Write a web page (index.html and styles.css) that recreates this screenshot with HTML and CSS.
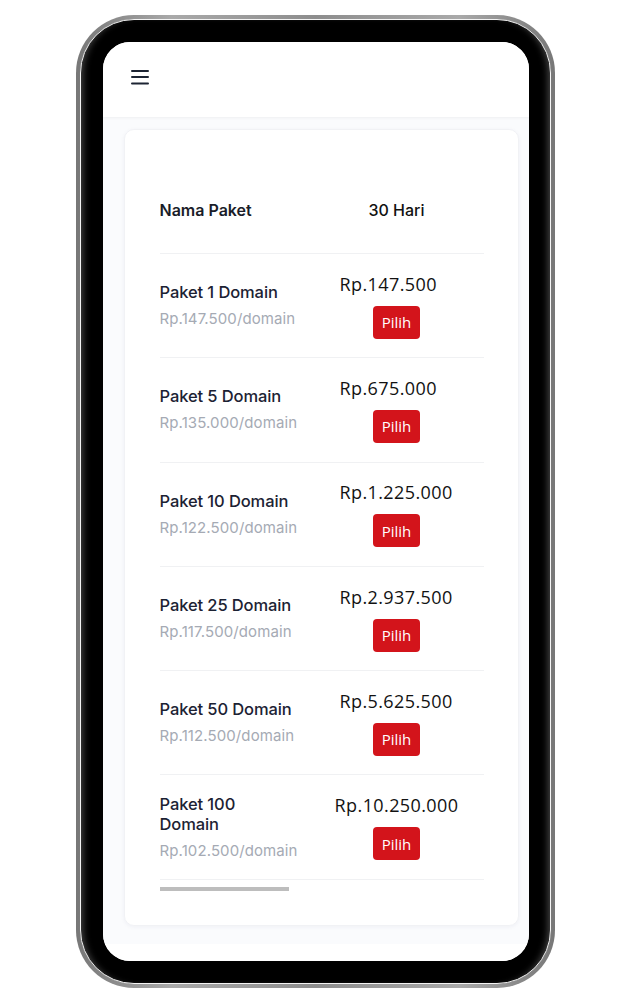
FILE: index.html
```html
<!DOCTYPE html>
<html lang="id">
<head>
<meta charset="utf-8">
<title>Paket Domain</title>
<link rel="stylesheet" href="styles.css">
</head>
<body>
<div class="phone">
  <div class="bezel">
    <div class="screen">
      <header class="topbar">
        <svg class="menu" width="18" height="16" viewBox="0 0 18 16" aria-hidden="true">
          <rect x="0" y="1" width="18" height="2" rx="1" fill="#1d2433"/>
          <rect x="0" y="7" width="18" height="2" rx="1" fill="#1d2433"/>
          <rect x="0" y="13.5" width="18" height="2" rx="1" fill="#1d2433"/>
        </svg>
      </header>
      <main class="main">
        <section class="card">
          <div class="table-wrap">
            <table class="pricing">
              <thead>
                <tr>
                  <th class="col-name">Nama Paket</th>
                  <th class="col-price">30 Hari</th>
                </tr>
              </thead>
              <tbody>
                <tr>
                  <td class="col-name"><div class="pkg">Paket 1 Domain</div><div class="per">Rp.147.500/domain</div></td>
                  <td class="col-price"><div class="price">Rp.147.500</div><button class="btn">Pilih</button></td>
                </tr>
                <tr>
                  <td class="col-name"><div class="pkg">Paket 5 Domain</div><div class="per">Rp.135.000/domain</div></td>
                  <td class="col-price"><div class="price">Rp.675.000</div><button class="btn">Pilih</button></td>
                </tr>
                <tr>
                  <td class="col-name"><div class="pkg">Paket 10 Domain</div><div class="per">Rp.122.500/domain</div></td>
                  <td class="col-price"><div class="price">Rp.1.225.000</div><button class="btn">Pilih</button></td>
                </tr>
                <tr>
                  <td class="col-name"><div class="pkg">Paket 25 Domain</div><div class="per">Rp.117.500/domain</div></td>
                  <td class="col-price"><div class="price">Rp.2.937.500</div><button class="btn">Pilih</button></td>
                </tr>
                <tr>
                  <td class="col-name"><div class="pkg">Paket 50 Domain</div><div class="per">Rp.112.500/domain</div></td>
                  <td class="col-price"><div class="price">Rp.5.625.500</div><button class="btn">Pilih</button></td>
                </tr>
                <tr>
                  <td class="col-name"><div class="pkg">Paket 100 Domain</div><div class="per">Rp.102.500/domain</div></td>
                  <td class="col-price"><div class="price">Rp.10.250.000</div><button class="btn">Pilih</button></td>
                </tr>
              </tbody>
            </table>
          </div>
          <div class="scroll-thumb"></div>
        </section>
      </main>
      <footer class="foot"></footer>
    </div>
  </div>
</div>
</body>
</html>
```

FILE: styles.css
```css
* { box-sizing: border-box; }

html, body {
  margin: 0;
  background: #ffffff;
}

body {
  padding: 15px 0 0 76px;
  font-family: "Inter", "Noto Sans", sans-serif;
}

.phone {
  width: 479px;
  height: 973px;
  border-radius: 58px;
  padding: 4px;
  background: linear-gradient(90deg, #777 0%, #a9a9a9 20%, #8d8d8d 50%, #a9a9a9 80%, #777 100%);
}

.bezel {
  height: 100%;
  border-radius: 54px;
  border: 1.5px solid #f4f4f4;
  padding: 21.5px 21px 22.5px 21.5px;
  background: #000;
  box-shadow: inset 7px 0 7px -5px rgba(255, 255, 255, 0.28), inset -7px 0 7px -5px rgba(255, 255, 255, 0.28);
}

.screen {
  height: 100%;
  border-radius: 27px;
  background: #fff;
  overflow: hidden;
  display: flex;
  flex-direction: column;
}

.topbar {
  height: 75px;
  flex: none;
  display: flex;
  align-items: center;
  padding-left: 28px;
  padding-bottom: 5px;
  background: #fff;
  box-shadow: 0 1px 3px rgba(0, 0, 0, 0.05);
  position: relative;
  z-index: 1;
}

.menu { display: block; }

.main {
  flex: 1;
  padding: 12px 10px 16px 21px;
  background: #fafbfd;
}

.card {
  height: 797px;
  background: #fff;
  border: 1px solid #f1f2f5;
  border-radius: 10px;
  box-shadow: 0 1px 4px rgba(30, 40, 90, 0.05);
  padding: 37px 34px 0 35px;
}

.table-wrap {
  width: 324px;
  overflow: hidden;
}

.pricing {
  width: 324px;
  border-collapse: collapse;
  table-layout: fixed;
}

.pricing th,
.pricing td {
  padding: 0;
  vertical-align: middle;
  border-bottom: 1px solid #f0f1f3;
}

.pricing th {
  height: 87px;
  font-size: 16px;
  font-weight: 600;
  color: #1a1d29;
}

.pricing td { height: 104.3px; }

.col-name {
  width: 150px;
  text-align: left;
  padding-right: 12px !important;
}

.col-price { text-align: center; }

th.col-price { color: #111; font-weight: 500; }

.pkg {
  font-size: 16.5px;
  font-weight: 500;
  line-height: 20px;
  color: #1c2233;
  letter-spacing: -0.1px;
  max-width: 134px;
}

.per {
  font-size: 15px;
  line-height: 20px;
  margin-top: 7px;
  color: #a5aab4;
  letter-spacing: 0.1px;
  white-space: nowrap;
}

.price {
  display: inline-block;
  min-width: 114px;
  text-align: left;
  font-family: "Open Sans", "Noto Sans", sans-serif;
  font-size: 18px;
  letter-spacing: 0.4px;
  line-height: 22px;
  color: #121212;
}

.btn {
  display: block;
  margin: 11px auto 0;
  height: 33px;
  padding: 0 9px;
  border: 0;
  border-radius: 4px;
  background: #d3141b;
  color: #fff;
  font-family: "Open Sans", "Noto Sans", sans-serif;
  font-size: 15px;
}

.scroll-thumb {
  width: 129px;
  height: 4px;
  margin-top: 7px;
  background: #bdbdbd;
}

.foot {
  height: 17px;
  flex: none;
  background: #fff;
}
```
